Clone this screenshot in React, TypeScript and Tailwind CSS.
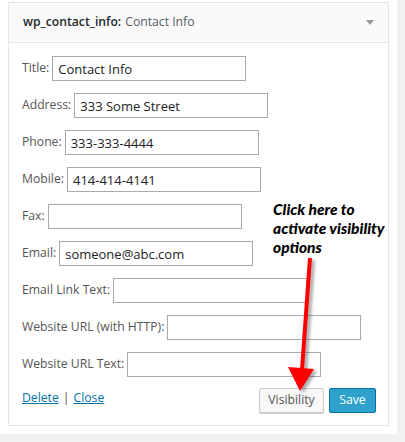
const fields = [
  { label: "Title:", value: "Contact Info" },
  { label: "Address:", value: "333 Some Street" },
  { label: "Phone:", value: "333-333-4444" },
  { label: "Mobile:", value: "414-414-4141" },
  { label: "Fax:", value: "" },
  { label: "Email:", value: "someone@abc.com" },
  { label: "Email Link Text:", value: "" },
  { label: "Website URL (with HTTP):", value: "" },
  { label: "Website URL Text:", value: "" },
]

function Field({ label, value }: { label: string; value: string }) {
  return (
    <div className="flex items-center h-[25px]">
      <span className="text-[12.2px] text-[#555]">{label}</span>
      <input
        readOnly
        value={value}
        className="ml-[3px] w-[194px] h-[25px] border border-[#aaa] bg-white px-[5px] text-[13px] text-[#222] outline-none"
      />
    </div>
  )
}

export default function App() {
  return (
    <div className="min-h-[442px] w-[405px] bg-[#f1f1f1] font-['Open_Sans',sans-serif]">
      <div className="relative w-[397px] h-[434px] bg-white pt-[2px] pl-[8px]">
        <div className="w-[381px] h-[424px] border border-[#e5e5e5] flex flex-col">
          <div className="h-[40px] bg-[#fafafa] border-b border-[#e5e5e5] flex items-center pl-[14px] pr-[14px] text-[12.2px]">
            <span className="font-semibold text-[#23282d]">wp_contact_info:</span>
            <span className="ml-[4px] text-[#555d66]">Contact Info</span>
            <span className="ml-auto w-0 h-0 border-l-[4px] border-r-[4px] border-t-[5px] border-l-transparent border-r-transparent border-t-[#999]" />
          </div>
          <div className="flex flex-col gap-[12px] pl-[13px] pr-[13px] pt-[13px]">
            {fields.map(f => (
              <Field key={f.label} label={f.label} value={f.value} />
            ))}
          </div>
          <div className="flex items-start pl-[13px] pr-[12px] mt-[11px]">
            <div className="text-[12.2px] pt-[1px] text-[#555]">
              <a className="text-[#0073aa] underline">Delete</a>
              <span className="mx-[4px]">|</span>
              <a className="text-[#0073aa] underline">Close</a>
            </div>
            <div className="ml-auto flex gap-[5px]">
              <button className="h-[25px] w-[65px] border border-[#ccc] bg-[#f7f7f7] rounded-[2px] text-[12.2px] text-[#555] shadow-[0_1px_0_#ccc]">
                Visibility
              </button>
              <button className="h-[25px] w-[47px] border border-[#0074a2] bg-[#2ea2cc] rounded-[2px] text-[12.2px] text-white">
                Save
              </button>
            </div>
          </div>
        </div>

        <div className="absolute left-[273px] top-[200px] font-['Lato',sans-serif] italic font-black text-[15.5px] leading-[19px] text-black">
          Click here to
          <br />
          activate visibility
          <br />
          options
        </div>

        <svg className="absolute left-0 top-0 pointer-events-none" width="397" height="434">
          <defs>
            <filter id="sh" x="-50%" y="-50%" width="200%" height="200%">
              <feGaussianBlur stdDeviation="1.5" />
            </filter>
          </defs>
          <g transform="translate(3,2)" filter="url(#sh)" opacity="0.5">
            <line x1="310" y1="258" x2="302" y2="370" stroke="#555" strokeWidth="4" />
            <polygon points="288,367 314,369 300,391" fill="#555" />
          </g>
          <line x1="310" y1="258" x2="302" y2="370" stroke="#ff0000" strokeWidth="4" />
          <polygon points="288,367 314,369 300,391" fill="#ff0000" />
        </svg>
      </div>
    </div>
  )
}
